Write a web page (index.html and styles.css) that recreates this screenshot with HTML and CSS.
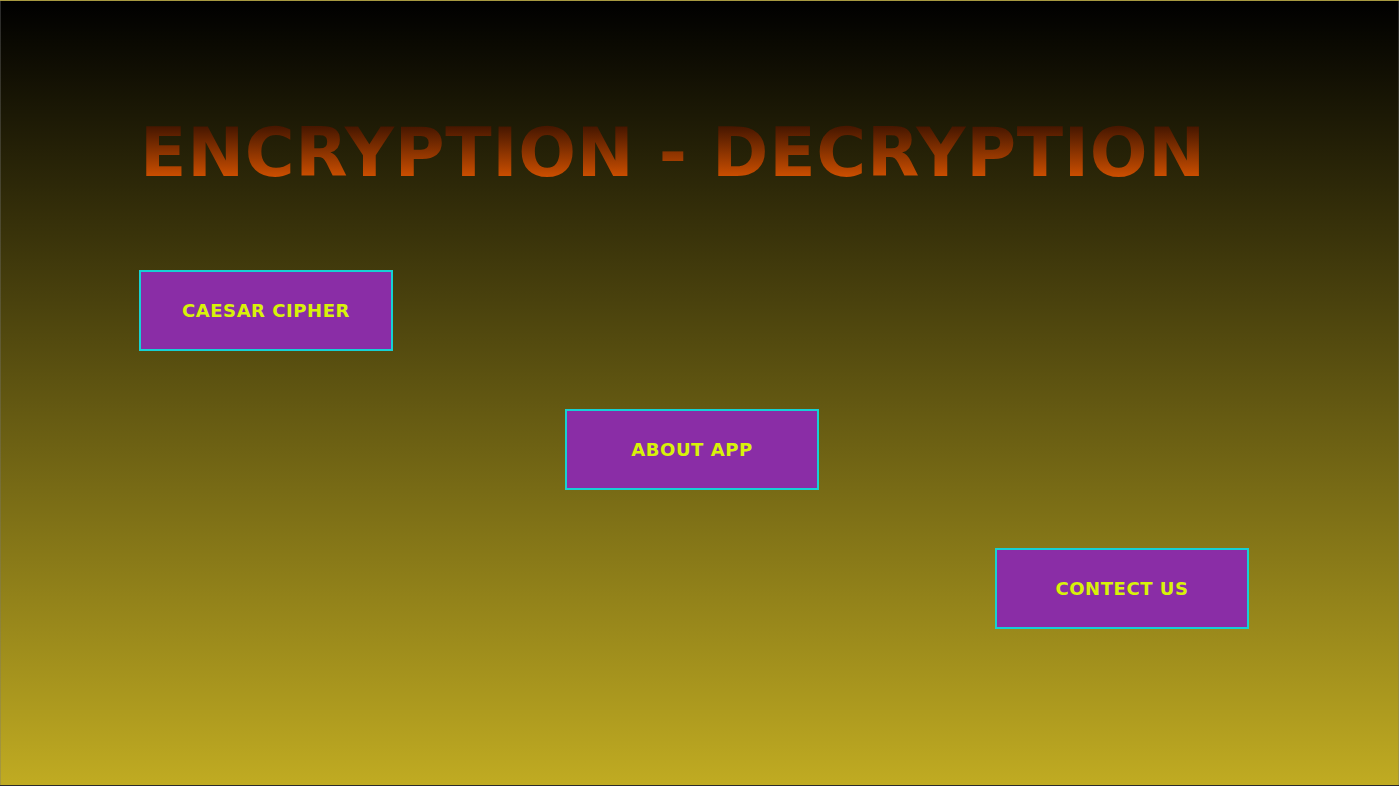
FILE: index.html
```html
<!DOCTYPE html>
<html lang="en">
<head>
<meta charset="utf-8">
<title>Encryption - Decryption</title>
<link rel="stylesheet" href="styles.css">
</head>
<body>
<main class="page">
  <h1 class="title">ENCRYPTION - DECRYPTION</h1>
  <nav class="menu">
    <button class="btn btn-1">CAESAR CIPHER</button>
    <button class="btn btn-2">ABOUT APP</button>
    <button class="btn btn-3">CONTECT US</button>
  </nav>
</main>
</body>
</html>
```
FILE: styles.css
```css
html, body {
  margin: 0;
  padding: 0;
  background: #ffffff;
}
.page {
  box-sizing: border-box;
  height: 786px;
  border: 1px solid rgba(120, 120, 120, 0.35);
  background: linear-gradient(to bottom, #000000 0%, #c0ab22 100%);
  padding: 110px 0 0 138px;
  font-family: "DejaVu Sans", Verdana, sans-serif;
}
.title {
  margin: 0;
  font-size: 68px;
  letter-spacing: 0.7px;
  font-weight: bold;
  line-height: 84px;
  background: linear-gradient(to bottom, #2a0c00 0%, #4a1800 20%, #d45200 82%, #c84c00 100%);
  -webkit-background-clip: text;
  background-clip: text;
  color: transparent;
  -webkit-text-fill-color: transparent;
  display: inline-block;
  padding-left: 1px;
}
.menu {
  display: grid;
  grid-template-columns: repeat(3, 254px);
  column-gap: 172px;
  row-gap: 58px;
  margin-top: 75px;
}
.btn {
  box-sizing: border-box;
  width: 254px;
  height: 81px;
  background: #8a2da6;
  border: 2px solid #16d0d4;
  color: #d8f208;
  font-family: "DejaVu Sans", Verdana, sans-serif;
  font-weight: bold;
  font-size: 18px;
  letter-spacing: 0.55px;
  padding: 0;
  cursor: pointer;
}
.btn-1 { grid-column: 1; grid-row: 1; }
.btn-2 { grid-column: 2; grid-row: 2; }
.btn-3 { grid-column: 3; grid-row: 3; margin-left: 4px; }
```
